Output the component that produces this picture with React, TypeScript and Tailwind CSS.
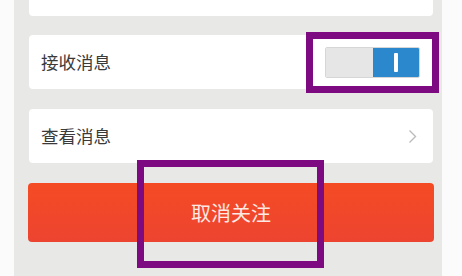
import { useState } from "react";

const App = () => {
  const [on, setOn] = useState<boolean>(true);

  return (
    <div
      className="relative w-[462px] h-[276px] overflow-hidden bg-[#fbfbfb] pl-[14px]"
      style={{ fontFamily: '"Noto Sans CJK SC", "Noto Sans", sans-serif' }}
    >
      <div className="w-[428px] h-full bg-[#e8e8e6] pl-[15px] pr-[9px] flex flex-col">
        <div className="h-[16px] bg-white rounded-b-sm" />

        <div className="mt-[19px] h-[54px] bg-white rounded-sm flex items-center justify-between pl-[12px] pr-[13px]">
          <p className="text-[17.5px] text-[#3a3a3a]">接收消息</p>
          <div
            onClick={() => setOn(!on)}
            className="flex w-[95px] h-[31px] border border-[#d6d6d6] rounded-[2px] overflow-hidden cursor-pointer"
          >
            <div className="w-[47px] bg-[#e6e6e6]" />
            <div className="flex-1 bg-[#2b88cc] flex items-center justify-center">
              <div className="w-[4px] h-[19px] bg-white rounded-[1px]" />
            </div>
          </div>
        </div>

        <div className="mt-[20px] h-[54px] bg-white rounded-sm flex items-center justify-between pl-[12px] pr-[16px]">
          <p className="text-[17.5px] text-[#3a3a3a]">查看消息</p>
          <svg width="9" height="15" viewBox="0 0 9 15" fill="none">
            <path d="M1.5 1.5 L7.5 7.5 L1.5 13.5" stroke="#bcbcbc" strokeWidth="1.4" />
          </svg>
        </div>

        <button className="mt-[20px] -mx-px h-[59px] rounded-[4px] bg-gradient-to-b from-[#f54b24] to-[#ec4430] text-[#fde9e4] text-[20px]">
          取消关注
        </button>
      </div>

      <div className="absolute left-[306px] top-[32px] w-[133px] h-[61px] border-[7px] border-[#7e0a82]" />
      <div className="absolute left-[137px] top-[160px] w-[187px] h-[108px] border-[7px] border-[#7e0a82]" />
    </div>
  );
};

export default App;
